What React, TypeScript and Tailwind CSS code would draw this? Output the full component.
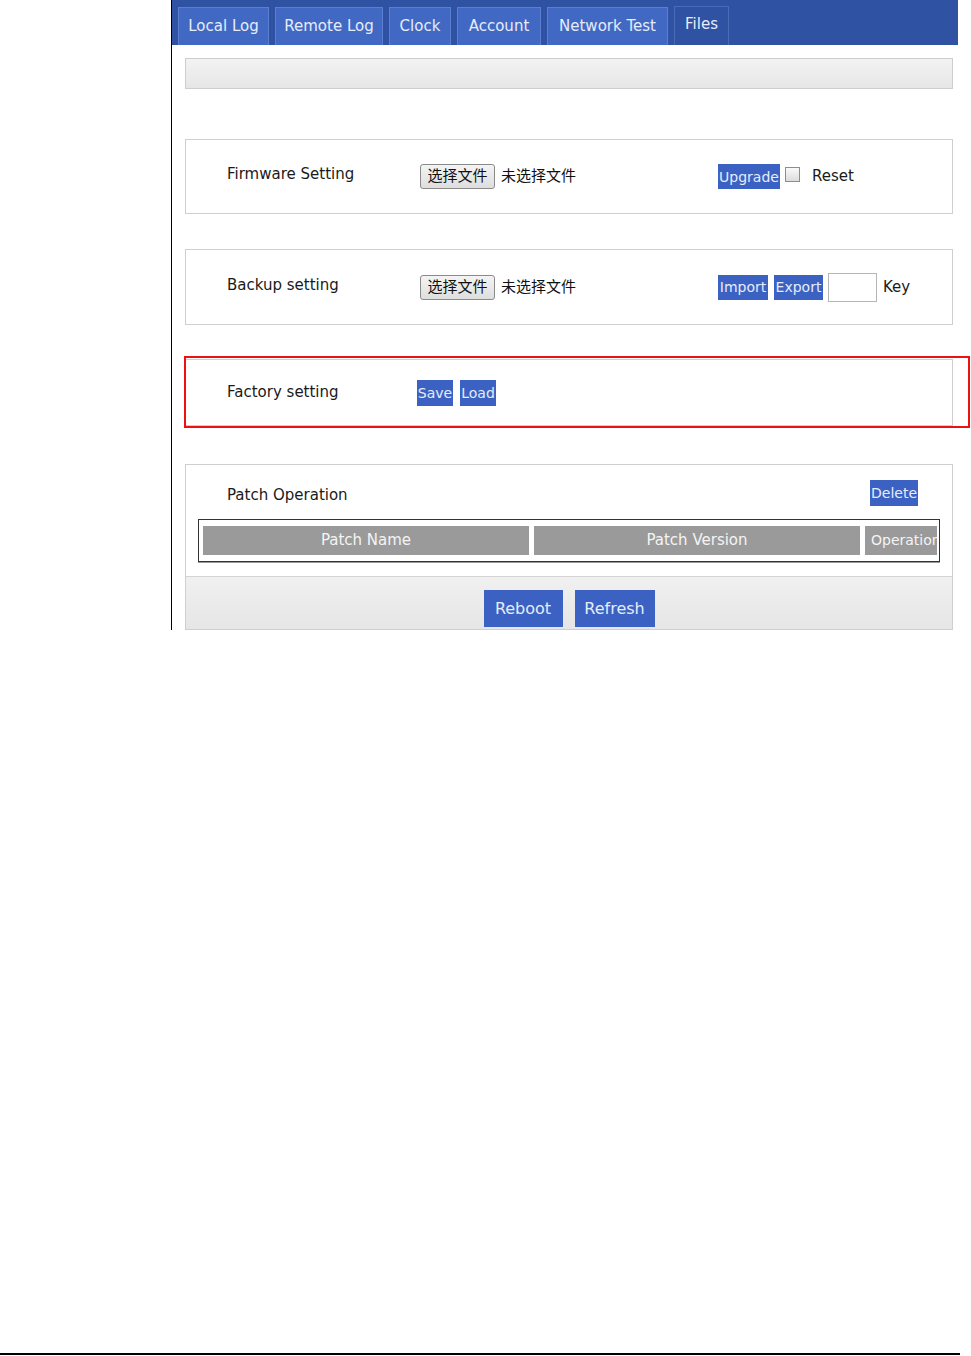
const TABS = [
  { label: 'Local Log', w: 91 },
  { label: 'Remote Log', w: 108 },
  { label: 'Clock', w: 62 },
  { label: 'Account', w: 84 },
  { label: 'Network Test', w: 121 },
  { label: 'Files', w: 55, active: true },
];

const font = '[font-family:"DejaVu_Sans","Noto_Sans_CJK_SC",sans-serif]';

function BlueBtn({ children, className = '' }: { children: React.ReactNode; className?: string }) {
  return (
    <span className={`inline-flex items-center justify-center bg-[#3b62c2] text-[#e6ecfb] text-[14px] leading-none ${className}`}>
      {children}
    </span>
  );
}

function FilePicker() {
  return (
    <div className="flex items-center gap-[6px]">
      <span className="inline-flex h-[25px] w-[75px] items-center justify-center rounded-[3px] border border-[#8a8a8a] bg-gradient-to-b from-[#f4f4f4] to-[#dedede] text-[15px] text-[#111]">
        选择文件
      </span>
      <span className="text-[15px] text-[#111]">未选择文件</span>
    </div>
  );
}

function Box({ children, className = '' }: { children: React.ReactNode; className?: string }) {
  return (
    <div className={`relative border border-[#cfcfcf] bg-white ${className}`}>{children}</div>
  );
}

export default function App() {
  return (
    <div className={`relative h-[1356px] w-[971px] bg-white ${font}`}>
      <div className="ml-[171px] h-[630px] w-[787px] overflow-hidden border-l border-black">
        {/* Tab bar */}
        <div className="flex h-[45px] items-end gap-[6px] bg-[#2f52a2] pl-[6px]">
          {TABS.map((t) => (
            <div
              key={t.label}
              style={{ width: t.w }}
              className={
                t.active
                  ? 'flex h-[39px] items-center justify-center border border-b-0 border-[#4a6cb6] bg-[#2f52a2] pb-[3px] text-[15px] text-[#e6ecfb]'
                  : 'flex h-[38px] items-center justify-center border border-b-0 border-[#5a7fd0] bg-[#4169c3] text-[15px] text-[#e6ecfb]'
              }
            >
              {t.label}
            </div>
          ))}
        </div>

        <div className="pl-[13px] pr-[5px]">
          <div className="mt-[13px] h-[31px] border border-[#cdcdcd] bg-gradient-to-b from-[#f3f3f3] to-[#e6e6e6]" />

          {/* Firmware */}
          <Box className="mt-[50px] flex h-[75px] items-center">
            <span className="ml-[41px] -mt-[4px] w-[193px] text-[15px] text-[#1a1a1a]">Firmware Setting</span>
            <FilePicker />
            <div className="ml-[142px] flex items-center">
              <BlueBtn className="h-[25px] w-[62px]">Upgrade</BlueBtn>
              <span className="ml-[5px] -mt-[5px] h-[15px] w-[15px] border border-[#8d8d8d] bg-gradient-to-b from-[#fafafa] to-[#dcdcdc]" />
              <span className="ml-[12px] text-[15px] text-[#1a1a1a]">Reset</span>
            </div>
          </Box>

          {/* Backup */}
          <Box className="mt-[35px] flex h-[76px] items-center">
            <span className="ml-[41px] -mt-[4px] w-[193px] text-[15px] text-[#1a1a1a]">Backup setting</span>
            <FilePicker />
            <div className="ml-[142px] flex items-center">
              <BlueBtn className="h-[25px] w-[50px]">Import</BlueBtn>
              <BlueBtn className="ml-[6px] h-[25px] w-[49px]">Export</BlueBtn>
              <span className="ml-[5px] h-[29px] w-[49px] border border-[#b5b5b5] bg-white" />
              <span className="ml-[6px] text-[15px] text-[#1a1a1a]">Key</span>
            </div>
          </Box>

          {/* Factory */}
          <Box className="mt-[34px] flex h-[67px] items-center">
            <span className="ml-[41px] w-[190px] text-[15px] text-[#1a1a1a]">Factory setting</span>
            <BlueBtn className="h-[26px] w-[36px]">Save</BlueBtn>
            <BlueBtn className="ml-[7px] h-[26px] w-[36px]">Load</BlueBtn>
          </Box>

          {/* Patch */}
          <div className="mt-[38px] border border-[#cfcfcf]">
            <div className="relative bg-white pb-[14px]">
              <div className="flex h-[54px] items-center justify-between pl-[41px] pr-[34px] pt-[6px]">
                <span className="text-[15px] text-[#1a1a1a]">Patch Operation</span>
                <BlueBtn className="-mt-[4px] h-[26px] w-[48px]">Delete</BlueBtn>
              </div>
              <div className="mx-[12px] flex h-[43px] gap-[5px] border border-[#333] py-[6px] pl-[4px] pr-[2px] shadow-[0_1px_0_#999]">
                <div className="flex w-[326px] items-center justify-center bg-[#9a9a9a] text-[15px] text-[#f4f4f4]">Patch Name</div>
                <div className="flex w-[326px] items-center justify-center bg-[#9a9a9a] text-[15px] text-[#f4f4f4]">Patch Version</div>
                <div className="flex w-[72px] items-center justify-start overflow-hidden whitespace-nowrap bg-[#9a9a9a] pl-[6px] text-[14px] text-[#f4f4f4]">Operation</div>
              </div>
            </div>
            <div className="flex h-[53px] items-start justify-center gap-[12px] border-t border-[#d4d4d4] bg-gradient-to-b from-[#f0f0f0] to-[#e6e6e6] pt-[13px]">
              <BlueBtn className="h-[37px] w-[79px] text-[16px]">Reboot</BlueBtn>
              <BlueBtn className="h-[37px] w-[80px] text-[16px]">Refresh</BlueBtn>
            </div>
          </div>
        </div>
      </div>

      {/* Red annotation outline around Factory setting */}
      <div className="absolute left-[184px] top-[356px] h-[72px] w-[786px] border-2 border-[#ee1111]" />

      {/* Page footer rule */}
      <div className="absolute left-0 top-[1353px] h-[2px] w-[960px] bg-black" />
    </div>
  );
}
